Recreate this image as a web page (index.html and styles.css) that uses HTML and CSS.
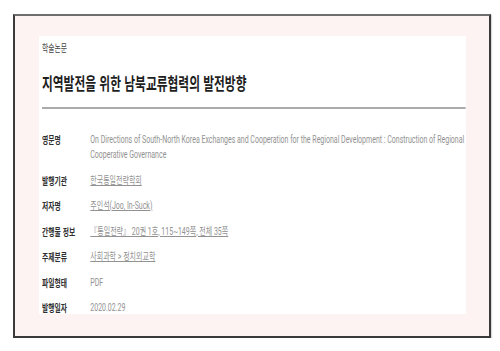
FILE: index.html
```html
<!DOCTYPE html>
<html lang="ko">
<head>
<meta charset="utf-8">
<title>학술논문</title>
<link rel="stylesheet" href="styles.css">
</head>
<body>
<div class="frame">
  <div class="panel">
    <div class="content">
      <div class="kind">학술논문</div>
      <h1 class="title">지역발전을 위한 남북교류협력의 발전방향</h1>
      <div class="rule"></div>
      <dl class="meta">
        <div class="row">
          <dt>영문명</dt>
          <dd>On Directions of South-North Korea Exchanges and Cooperation for the Regional Development : Construction of Regional Cooperative Governance</dd>
        </div>
        <div class="row">
          <dt>발행기관</dt>
          <dd><a class="link" href="#">한국통일전략학회</a></dd>
        </div>
        <div class="row">
          <dt>저자명</dt>
          <dd><a class="link" href="#">주인석(Joo, In-Suck)</a></dd>
        </div>
        <div class="row">
          <dt>간행물 정보</dt>
          <dd><a class="link" href="#">『통일전략』 20권 1호, 115~149쪽, 전체 35쪽</a></dd>
        </div>
        <div class="row">
          <dt>주제분류</dt>
          <dd><a class="link" href="#">사회과학 &gt; 정치외교학</a></dd>
        </div>
        <div class="row">
          <dt>파일형태</dt>
          <dd>PDF</dd>
        </div>
        <div class="row">
          <dt>발행일자</dt>
          <dd>2020.02.29</dd>
        </div>
      </dl>
    </div>
  </div>
</div>
</body>
</html>
```

FILE: styles.css
```css
html, body {
  margin: 0;
  padding: 0;
  background: #ffffff;
}

body {
  padding: 14px 0 0 13px;
  font-family: "Noto Sans CJK KR", "Noto Sans", sans-serif;
}

.frame {
  box-sizing: border-box;
  width: 478px;
  height: 324px;
  border: 2px solid #3a3a3a;
  border-top-color: #6e6e6e;
  background: #fdf3f2;
  padding: 20px 23px 22px 24px;
  box-shadow: 1px 1px 1px rgba(0, 0, 0, 0.15);
}

.panel {
  background: #ffffff;
  height: 278px;
  padding-left: 3px;
}

.content {
  width: 623px;
  transform: scaleX(0.68);
  transform-origin: 0 0;
  padding-top: 5px;
}

.kind {
  font-size: 10px;
  line-height: 14px;
  color: #444;
}

.title {
  margin: 16px 0 0;
  font-size: 17.3px;
  line-height: 24px;
  font-weight: 700;
  color: #1e1e1e;
}

.rule {
  margin-top: 12px;
  height: 2px;
  background: #ababab;
}

.meta {
  margin: 23px 0 0;
  display: flex;
  flex-direction: column;
  gap: 10.5px;
}

.row {
  display: flex;
  font-size: 10px;
  line-height: 15px;
}

.row dt {
  width: 71px;
  flex: none;
  font-weight: 700;
  color: #2e2e2e;
}

.row dd {
  margin: 0;
  flex: 1;
  font-family: Roboto, "Noto Sans CJK KR", sans-serif;
  font-size: 10.3px;
  color: #929292;
}

.link {
  color: #929292;
  text-decoration: underline;
}
```
